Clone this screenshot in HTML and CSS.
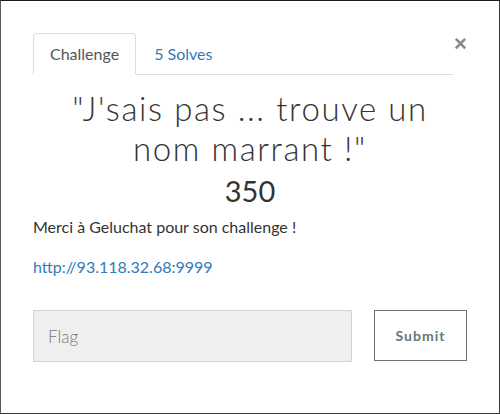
FILE: index.html
```html
<!DOCTYPE html>
<html lang="fr">
<head>
<meta charset="utf-8">
<title>Challenge</title>
<link rel="stylesheet" href="styles.css">
</head>
<body>
<div class="modal">
  <div class="head">
    <ul class="tabs">
      <li class="tab active">Challenge</li>
      <li class="tab"><a href="#">5 Solves</a></li>
    </ul>
    <button class="close" type="button">×</button>
  </div>
  <h1 class="title">"J'sais pas ... trouve un nom marrant !"</h1>
  <div class="points">350</div>
  <p class="desc">Merci à Geluchat pour son challenge !</p>
  <p class="desc"><a href="#">http://93.118.32.68:9999</a></p>
  <form class="submit-row">
    <input class="flag" type="text" placeholder="Flag">
    <button class="submit" type="button">Submit</button>
  </form>
</div>
</body>
</html>
```
FILE: styles.css
```css
* { box-sizing: border-box; }
html, body { margin: 0; padding: 0; }
body {
  width: 500px;
  height: 414px;
  background: #333;
  font-family: Lato, "Open Sans", sans-serif;
  color: #333;
}
.modal {
  width: 500px;
  height: 414px;
  background: #fff;
  border: 1px solid #3a3a3a;
  border-top-color: #1a1a1a;
  border-left-color: #5a5a5a;
  padding: 32px 32px 0 32px;
}
.head {
  display: flex;
  align-items: flex-start;
}
.tabs {
  flex: 1;
  display: flex;
  list-style: none;
  margin: 0;
  padding: 0;
  border-bottom: 1px solid #ddd;
}
.tab {
  font-size: 16px;
  line-height: 20px;
  padding: 10px 17px;
  margin-bottom: -1px;
  border: 1px solid transparent;
  border-radius: 4px 4px 0 0;
  color: #555;
}
.tab.active {
  border-color: #ddd;
  border-bottom-color: #fff;
  background: #fff;
  padding: 10px 16px;
}
.tab a { color: #337ab7; text-decoration: none; }
.close {
  width: 13px;
  padding: 0;
  border: 0;
  background: none;
  font-family: "Liberation Sans", sans-serif;
  font-size: 22px;
  font-weight: bold;
  line-height: 20px;
  color: #888;
  margin-top: 1px;
  margin-left: 1px;
}
.title {
  margin: 13px 0 0;
  font-size: 33px;
  font-weight: 300;
  letter-spacing: 1.6px;
  line-height: 40px;
  text-align: center;
  color: #333;
}
.points {
  text-align: center;
  font-size: 29px;
  line-height: 34px;
  margin-top: 6px;
  color: #333;
}
.desc {
  margin: 9px 0 0;
  font-size: 16px;
  line-height: 20px;
}
.desc + .desc { margin-top: 20px; }
.desc a { color: #337ab7; text-decoration: none; }
.submit-row {
  display: flex;
  justify-content: space-between;
  align-items: flex-start;
  margin-top: 33px;
}
.flag {
  width: 319px;
  height: 52px;
  background: #efefef;
  border: 1px solid #cfd3da;
  padding: 0 14px;
  font-family: Lato, sans-serif;
  font-weight: 300;
  font-size: 17px;
  color: #555;
  outline: none;
}
.flag::placeholder { color: #777; }
.submit {
  width: 93px;
  height: 51px;
  background: #fff;
  border: 1px solid #6c737a;
  font-family: Lato, sans-serif;
  font-weight: bold;
  font-size: 14px;
  letter-spacing: 1px;
  color: #6c737a;
  padding: 0;
}
```
